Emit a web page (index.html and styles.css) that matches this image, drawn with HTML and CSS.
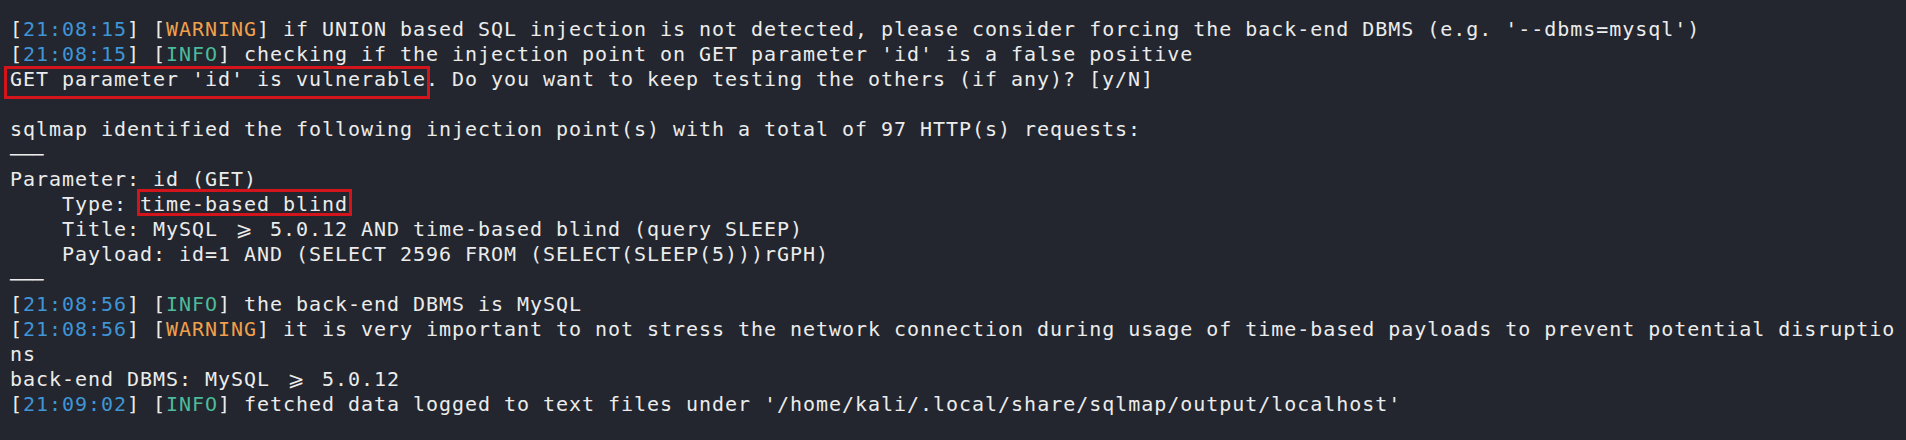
FILE: index.html
```html
<!DOCTYPE html>
<html lang="en">
<head>
<meta charset="utf-8">
<title>sqlmap output</title>
<link rel="stylesheet" href="styles.css">
</head>
<body>
<main class="term">
<div class="ln">[<span class="ts">21:08:15</span>] [<span class="warn">WARNING</span>] if UNION based SQL injection is not detected, please consider forcing the back-end DBMS (e.g. '--dbms=mysql')</div>
<div class="ln">[<span class="ts">21:08:15</span>] [<span class="info">INFO</span>] checking if the injection point on GET parameter 'id' is a false positive</div>
<div class="ln"><span class="hl hl-a">GET parameter 'id' is vulnerable</span>. Do you want to keep testing the others (if any)? [y/N]</div>
<div class="ln"> </div>
<div class="ln">sqlmap identified the following injection point(s) with a total of 97 HTTP(s) requests:</div>
<div class="ln"><span class="rule">───</span></div>
<div class="ln">Parameter: id (GET)</div>
<div class="ln">    Type: <span class="hl hl-b">time-based blind</span></div>
<div class="ln">    Title: MySQL <span class="lig">⩾</span> 5.0.12 AND time-based blind (query SLEEP)</div>
<div class="ln">    Payload: id=1 AND (SELECT 2596 FROM (SELECT(SLEEP(5)))rGPH)</div>
<div class="ln"><span class="rule">───</span></div>
<div class="ln">[<span class="ts">21:08:56</span>] [<span class="info">INFO</span>] the back-end DBMS is MySQL</div>
<div class="ln">[<span class="ts">21:08:56</span>] [<span class="warn">WARNING</span>] it is very important to not stress the network connection during usage of time-based payloads to prevent potential disruptio</div>
<div class="ln">ns</div>
<div class="ln">back-end DBMS: MySQL <span class="lig">⩾</span> 5.0.12</div>
<div class="ln">[<span class="ts">21:09:02</span>] [<span class="info">INFO</span>] fetched data logged to text files under '/home/kali/.local/share/sqlmap/output/localhost'</div>
</main>
</body>
</html>
```
FILE: styles.css
```css
html, body {
  margin: 0;
  padding: 0;
  background: #23262e;
}

.term {
  box-sizing: border-box;
  width: 1906px;
  height: 440px;
  padding: 17px 0 0 10px;
  background: #23262e;
  color: #ececec;
  font-family: "DejaVu Sans Mono", "DejaVu Sans", monospace;
  font-size: 20px;
  letter-spacing: 0.96px;
  overflow: hidden;
}

.ln {
  height: 25px;
  line-height: 25px;
  white-space: pre;
}

.ts { color: #3f95d6; }
.warn { color: #f0a04c; }
.info { color: #4cbb9b; }

.hl {
  position: relative;
}

.hl::after {
  content: "";
  position: absolute;
  border: 3px solid #d3141b;
}

.hl-a::after {
  left: -6px;
  right: -4px;
  top: -1px;
  bottom: -8px;
}

.hl-b::after {
  left: -3px;
  right: -4px;
  top: -3px;
  bottom: 0px;
}

.rule {
  letter-spacing: 0;
  font-size: 18.5px;
  color: #ececec;
}

.lig {
  display: inline-block;
  width: 26px;
  text-align: center;
  letter-spacing: 0;
  font-family: "DejaVu Sans", "DejaVu Sans Mono", sans-serif;
}
```
